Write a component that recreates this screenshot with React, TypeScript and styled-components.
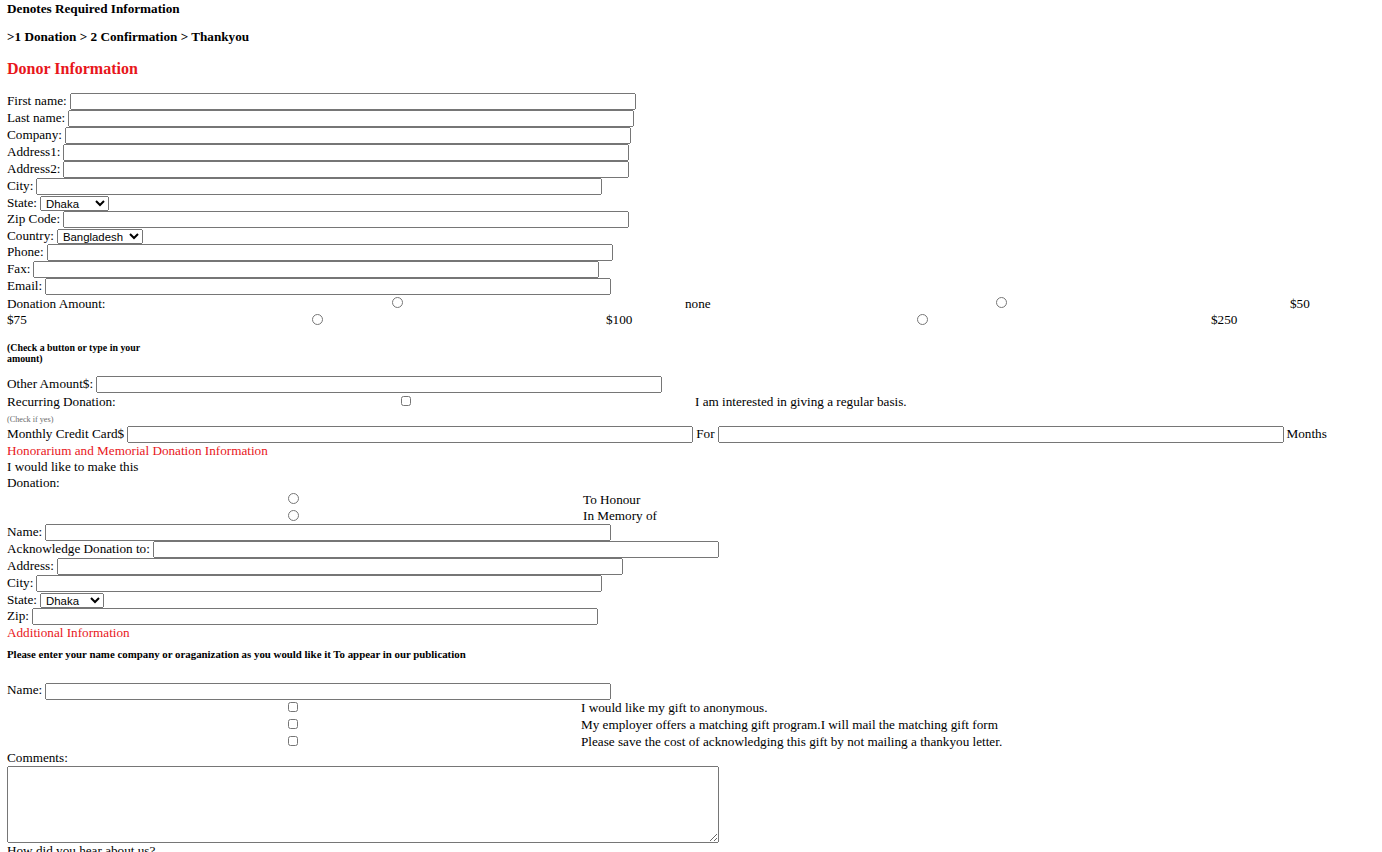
import styled, { createGlobalStyle } from "styled-components";

const GlobalStyle = createGlobalStyle`
  html, body {
    margin: 0;
    padding: 0;
    background: #ffffff;
  }
  body {
    font-family: "Liberation Serif", "Times New Roman", serif;
    font-size: 13.2px;
    color: #000000;
  }
`;

const Page = styled.form`
  padding: 1px 7px 0;
`;

const Note = styled.div<{ $mt?: number }>`
  margin-top: ${(p) => p.$mt ?? 0}px;
  font-weight: 700;
  font-size: 13.2px;
  line-height: 16px;
`;

const SectionTitle = styled.div<{ $big?: boolean; $mt?: number }>`
  margin-top: ${(p) => p.$mt ?? 0}px;
  color: #e8161b;
  font-size: ${(p) => (p.$big ? "16px" : "13.2px")};
  font-weight: ${(p) => (p.$big ? 700 : 400)};
  line-height: ${(p) => (p.$big ? "20px" : "16px")};
`;

const FieldRow = styled.div<{ $h?: number; $mt?: number }>`
  display: flex;
  align-items: center;
  gap: 3px;
  height: ${(p) => p.$h ?? 17}px;
  margin-top: ${(p) => p.$mt ?? 0}px;
  white-space: nowrap;
`;

const FieldLabel = styled.span<{ $lift?: boolean }>`
  margin-bottom: ${(p) => (p.$lift ? 2 : 0)}px;
`;

const TextField = styled.input.attrs({ type: "text" })`
  box-sizing: border-box;
  width: 566px;
  height: 17px;
  margin: 0;
  padding: 1px 2px;
  font-size: 10.6px;
  font-family: "Liberation Sans", Arial, sans-serif;
  flex: none;
`;

const Dropdown = styled.select<{ $w: number }>`
  box-sizing: border-box;
  width: ${(p) => p.$w}px;
  height: 15px;
  margin: 0;
  padding: 0 0 0 1px;
  font-size: 11.4px;
  line-height: 13px;
  font-family: "Liberation Sans", Arial, sans-serif;
  flex: none;
`;

const ChoiceRow = styled.div<{ $h?: number }>`
  display: flex;
  align-items: center;
  height: ${(p) => p.$h ?? 17}px;
  white-space: nowrap;
`;

const Cell = styled.div<{ $w?: number }>`
  flex: none;
  width: ${(p) => (p.$w ? `${p.$w}px` : "auto")};
  display: flex;
  align-items: center;
  align-self: stretch;
`;

const Radio = styled.input.attrs({ type: "radio" })<{ $top?: number }>`
  width: 11px;
  height: 11px;
  margin: ${(p) => p.$top ?? 2}px 0 0 0;
  align-self: flex-start;
`;

const Tick = styled.input.attrs({ type: "checkbox" })<{ $top?: number }>`
  width: 10px;
  height: 10px;
  margin: ${(p) => p.$top ?? 2}px 0 0 0;
  align-self: flex-start;
`;

const Hint = styled.div<{ $mt?: number; $w?: number; $size?: number }>`
  margin-top: ${(p) => p.$mt ?? 0}px;
  width: ${(p) => (p.$w ? `${p.$w}px` : "auto")};
  font-size: ${(p) => p.$size ?? 9.9}px;
  font-weight: 700;
  line-height: 10.5px;
`;

const Tiny = styled.div`
  margin-top: 5px;
  font-size: 8.2px;
  line-height: 9px;
  color: #6b6b6b;
`;

const Wrapped = styled.div`
  width: 145px;
  line-height: 16px;
`;

const Plain = styled.div`
  line-height: 16px;
`;

const Comments = styled.textarea`
  display: block;
  box-sizing: border-box;
  width: 712px;
  height: 77px;
  margin: 0;
  font-family: "Liberation Mono", monospace;
  font-size: 10.6px;
`;

type Field = { label: string; kind?: "text" | "select"; options?: string[]; w?: number };

const donorFields: Field[] = [
  { label: "First name:" },
  { label: "Last name:" },
  { label: "Company:" },
  { label: "Address1:" },
  { label: "Address2:" },
  { label: "City:" },
  { label: "State:", kind: "select", options: ["Dhaka", "Chittagong"], w: 69 },
  { label: "Zip Code:" },
  { label: "Country:", kind: "select", options: ["Bangladesh"], w: 86 },
  { label: "Phone:" },
  { label: "Fax:" },
  { label: "Email:" },
];

const honourFields: Field[] = [
  { label: "Name:" },
  { label: "Acknowledge Donation to:" },
  { label: "Address:" },
  { label: "City:" },
  { label: "State:", kind: "select", options: ["Dhaka"], w: 64 },
  { label: "Zip:" },
];

const renderFields = (fields: Field[]) =>
  fields.map((f, i) =>
    f.kind === "select" ? (
      <FieldRow key={i} $h={16}>
        <FieldLabel>{f.label}</FieldLabel>
        <Dropdown $w={f.w ?? 68} defaultValue={f.options?.[0]}>
          {f.options?.map((o) => (
            <option key={o}>{o}</option>
          ))}
        </Dropdown>
      </FieldRow>
    ) : (
      <FieldRow key={i}>
        <FieldLabel $lift>{f.label}</FieldLabel>
        <TextField />
      </FieldRow>
    )
  );

const FieldGroup = styled.div<{ $mt?: number }>`
  margin-top: ${(p) => p.$mt ?? 0}px;
`;

export default function App() {
  return (
    <>
      <GlobalStyle />
      <Page onSubmit={(e) => e.preventDefault()}>
        <Note>Denotes Required Information</Note>
        <Note $mt={12}>&gt;1 Donation &gt; 2 Confirmation &gt; Thankyou</Note>
        <SectionTitle $big $mt={14}>
          Donor Information
        </SectionTitle>

        <FieldGroup $mt={14}>{renderFields(donorFields)}</FieldGroup>

        <ChoiceRow>
          <Cell $w={385}>Donation Amount:</Cell>
          <Cell $w={293}>
            <Radio name="amount" />
          </Cell>
          <Cell $w={311}>none</Cell>
          <Cell $w={294}>
            <Radio name="amount" />
          </Cell>
          <Cell>$50</Cell>
        </ChoiceRow>
        <ChoiceRow $h={16}>
          <Cell $w={305}>$75</Cell>
          <Cell $w={294}>
            <Radio name="amount" />
          </Cell>
          <Cell $w={311}>$100</Cell>
          <Cell $w={294}>
            <Radio name="amount" />
          </Cell>
          <Cell>$250</Cell>
        </ChoiceRow>

        <Hint $mt={15} $w={150}>
          (Check a button or type in your amount)
        </Hint>

        <FieldRow $mt={12}>
          <FieldLabel $lift>Other Amount$:</FieldLabel>
          <TextField />
        </FieldRow>
        <ChoiceRow>
          <Cell $w={394}>Recurring Donation:</Cell>
          <Cell $w={294}>
            <Tick $top={3} />
          </Cell>
          <Cell>I am interested in giving a regular basis.</Cell>
        </ChoiceRow>
        <Tiny>(Check if yes)</Tiny>
        <FieldRow $mt={2}>
          <FieldLabel $lift>Monthly Credit Card$</FieldLabel>
          <TextField />
          <FieldLabel $lift>For</FieldLabel>
          <TextField />
          <FieldLabel $lift>Months</FieldLabel>
        </FieldRow>

        <SectionTitle>Honorarium and Memorial Donation Information</SectionTitle>
        <Wrapped>I would like to make this Donation:</Wrapped>
        <ChoiceRow>
          <Cell $w={281} />
          <Cell $w={295}>
            <Radio name="honour" $top={1.5} />
          </Cell>
          <Cell>To Honour</Cell>
        </ChoiceRow>
        <ChoiceRow $h={16}>
          <Cell $w={281} />
          <Cell $w={295}>
            <Radio name="honour" $top={1.5} />
          </Cell>
          <Cell>In Memory of</Cell>
        </ChoiceRow>

        {renderFields(honourFields)}

        <SectionTitle>Additional Information</SectionTitle>
        <Hint $mt={8} $size={10.85}>
          Please enter your name company or oraganization as you would like it To appear in our
          publication
        </Hint>
        <FieldRow $mt={23}>
          <FieldLabel $lift>Name:</FieldLabel>
          <TextField />
        </FieldRow>
        {[
          "I would like my gift to anonymous.",
          "My employer offers a matching gift program.I will mail the matching gift form",
          "Please save the cost of acknowledging this gift by not mailing a thankyou letter.",
        ].map((t, i) => (
          <ChoiceRow key={t} $h={i === 2 ? 16 : 17}>
            <Cell $w={281} />
            <Cell $w={293}>
              <Tick $top={2} />
            </Cell>
            <Cell>{t}</Cell>
          </ChoiceRow>
        ))}
        <Plain>Comments:</Plain>
        <Comments />
        <Plain>How did you hear about us?</Plain>
      </Page>
    </>
  );
}
